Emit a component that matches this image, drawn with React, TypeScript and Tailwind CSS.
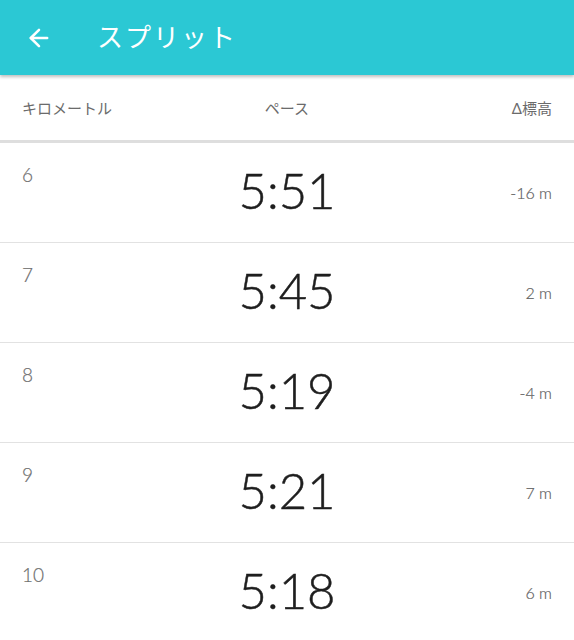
import { ArrowLeft } from "lucide-react";

type Split = {
  km: number;
  pace: string;
  elevation: string;
};

const splits: Split[] = [
  { km: 6, pace: "5:51", elevation: "-16 m" },
  { km: 7, pace: "5:45", elevation: "2 m" },
  { km: 8, pace: "5:19", elevation: "-4 m" },
  { km: 9, pace: "5:21", elevation: "7 m" },
  { km: 10, pace: "5:18", elevation: "6 m" },
];

const font = "font-['Lato','Noto_Sans_CJK_JP',sans-serif]";

function SplitRow({ split }: { split: Split }) {
  return (
    <div className="relative flex h-[100px] items-center border-b border-[#e2e2e2] px-[22px] font-light">
      <div className="absolute left-[22px] top-[18px] text-[19px] text-[#6e6e6e] [-webkit-text-stroke:0.2px_#6e6e6e]">{split.km}</div>
      <div className="flex-1 pb-[5px] text-center text-[49px] leading-none text-[#1e1e1e] [-webkit-text-stroke:0.5px_#1e1e1e]">
        {split.pace}
      </div>
      <div className="absolute right-[22px] top-[38px] text-[16px] text-[#5e5e5e] [-webkit-text-stroke:0.2px_#5e5e5e]">
        {split.elevation}
      </div>
    </div>
  );
}

export default function App() {
  return (
    <div className={`h-[640px] w-[574px] overflow-hidden bg-white ${font}`}>
      <div className="relative z-10 flex h-[75px] items-center bg-[#2bc8d4] shadow-[0_2px_3px_rgba(0,0,0,0.25)]">
        <ArrowLeft className="ml-[25px] h-[28px] w-[28px] text-white" strokeWidth={2.2} />
        <h1 className="ml-[44px] text-[26px] tracking-[2px] text-white">スプリット</h1>
      </div>
      <div className="flex h-[68px] items-center justify-between border-b-[3px] border-[#dedede] px-[22px] pt-[2px] text-[15px] text-[#6b6b6b]">
        <span className="w-[120px]">キロメートル</span>
        <span>ペース</span>
        <span className="w-[120px] text-right">Δ標高</span>
      </div>
      {splits.map((s) => (
        <SplitRow key={s.km} split={s} />
      ))}
    </div>
  );
}
